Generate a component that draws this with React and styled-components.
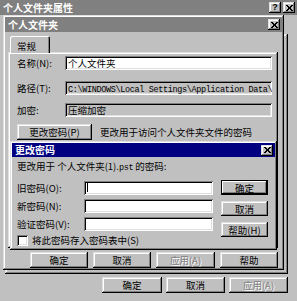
import React from "react";
import styled, { createGlobalStyle, css } from "styled-components";

const GlobalStyle = createGlobalStyle`
  html, body {
    margin: 0;
    padding: 0;
    background: #c0c0c0;
  }
  body {
    font-family: "Noto Sans CJK SC", "Liberation Sans", sans-serif;
    font-size: 9.5px;
    color: #000;
  }
  * {
    box-sizing: border-box;
  }
`;

const raised = css`
  box-shadow: inset -1px -1px #000, inset 1px 1px #dfdfdf,
    inset -2px -2px #808080, inset 2px 2px #fff;
`;

const sunken = css`
  box-shadow: inset 1px 1px #808080, inset -1px -1px #fff,
    inset 2px 2px #000, inset -2px -2px #dfdfdf;
`;

const Desktop = styled.div`
  position: relative;
  width: 297px;
  height: 301px;
  overflow: hidden;
  background: #c0c0c0;
`;

const MainWindow = styled.div`
  display: flex;
  flex-direction: column;
  width: 297px;
  height: 301px;
`;

const Window = styled.div`
  position: absolute;
  left: ${(p) => p.$x}px;
  top: ${(p) => p.$y}px;
  width: ${(p) => p.$w}px;
  height: ${(p) => p.$h}px;
  display: flex;
  flex-direction: column;
  padding: 2px;
  background: #c0c0c0;
  ${raised};
`;

const TitleBar = styled.div`
  display: flex;
  align-items: center;
  height: ${(p) => p.$h}px;
  flex-shrink: 0;
  padding: 0 2px 0 3px;
  background: ${(p) => (p.$active ? "#000080" : "#808080")};
  color: #fff;
  font-weight: bold;
  font-size: 10px;
  line-height: 1;
`;

const TitleText = styled.span`
  flex: 1;
  white-space: nowrap;
`;

const CaptionButton = styled.div`
  display: flex;
  align-items: center;
  justify-content: center;
  width: 12px;
  height: 11px;
  margin-left: ${(p) => p.$gap || 0}px;
  background: #c0c0c0;
  color: #000;
  font-family: "Liberation Sans", sans-serif;
  font-size: 9px;
  font-weight: bold;
  ${raised};
`;

const CloseGlyph = () => (
  <svg width="7" height="6" viewBox="0 0 7 6" shapeRendering="crispEdges">
    <path
      d="M0 0h2v1h1v1h1V1h1V0h2v1H6v1H5v2h1v1h1v1H5V5H4V4H3v1H2v1H0V5h1V4h1V2H1V1H0z"
      fill="#000"
    />
  </svg>
);

const OuterBody = styled.div`
  flex: 1;
  display: flex;
  flex-direction: column;
  padding: 19px 9px 8px 5px;
`;

const OuterPanel = styled.div`
  flex: 1;
  ${raised};
`;

const ButtonRow = styled.div`
  display: flex;
  justify-content: flex-end;
  gap: ${(p) => p.$gap}px;
  margin-top: ${(p) => p.$mt}px;
  padding-right: ${(p) => p.$pr}px;
  flex-shrink: 0;
`;

const Button = styled.div`
  display: flex;
  align-items: center;
  justify-content: center;
  width: ${(p) => p.$w}px;
  height: ${(p) => p.$h || 16}px;
  background: #c0c0c0;
  white-space: nowrap;
  color: ${(p) => (p.$disabled ? "#808080" : "#000")};
  text-shadow: ${(p) => (p.$disabled ? "1px 1px #fff" : "none")};
  ${(p) =>
    p.$default
      ? css`
          box-shadow: inset 0 0 0 1px #000, inset -2px -2px #000,
            inset 2px 2px #fff, inset -3px -3px #808080;
        `
      : raised};
`;

const TabStrip = styled.div`
  display: flex;
  padding-left: 5px;
  margin-top: 4px;
  height: 16px;
  flex-shrink: 0;
`;

const Tab = styled.div`
  width: 40px;
  height: 17px;
  padding: 3px 0 0 7px;
  background: #c0c0c0;
  position: relative;
  z-index: 1;
  border-top-left-radius: 2px;
  border-top-right-radius: 2px;
  box-shadow: inset 1px 1px #fff, inset -1px 0 #000, inset -2px 0 #808080;
`;

const TabPanel = styled.div`
  flex: 1;
  margin: 0 4px 0 3px;
  padding: 4px 6px 0 9px;
  ${raised};
`;

const FieldRow = styled.div`
  display: grid;
  grid-template-columns: 48px 1fr;
  align-items: center;
  margin-top: ${(p) => p.$mt || 0}px;
`;

const Label = styled.span`
  white-space: nowrap;
`;

const Field = styled.div`
  height: ${(p) => p.$h || 14}px;
  padding: 0 2px 0 3px;
  line-height: ${(p) => p.$h || 14}px;
  white-space: nowrap;
  overflow: hidden;
  background: ${(p) => (p.$readOnly ? "#c0c0c0" : "#fff")};
  ${sunken};
`;

const MonoText = styled.span`
  font-family: "Liberation Mono", monospace;
  font-size: 8.5px;
  letter-spacing: -0.35px;
`;

const ActionRow = styled.div`
  display: flex;
  align-items: center;
  gap: 8px;
  margin-top: 7px;
`;

const Message = styled.div`
  margin: 3px 0 0 5px;
  height: 12px;
  line-height: 12px;
  white-space: nowrap;
`;

const FormArea = styled.div`
  display: flex;
  align-items: flex-start;
  margin-top: 8px;
  padding-left: 5px;
`;

const FormColumn = styled.div`
  display: flex;
  flex-direction: column;
  padding-top: 1px;
`;

const FormGrid = styled.div`
  display: grid;
  grid-template-columns: 67px 129px;
  grid-auto-rows: 14px;
  row-gap: 4px;
  align-items: center;
`;

const Caret = styled.span`
  display: inline-block;
  width: 1px;
  height: 9px;
  margin-top: 2px;
  background: #000;
  vertical-align: top;
`;

const ButtonColumn = styled.div`
  display: flex;
  flex-direction: column;
  gap: 6px;
  margin-left: 8px;
`;

const CheckRow = styled.label`
  display: flex;
  align-items: center;
  gap: 4px;
  margin-top: 3px;
  height: 12px;
  white-space: nowrap;
`;

const CheckBox = styled.span`
  width: 11px;
  height: 11px;
  background: #fff;
  ${sunken};
`;

export default function App() {
  return (
    <>
      <GlobalStyle />
      <Desktop>
        <MainWindow>
          <TitleBar $h={15}>
            <TitleText>个人文件夹属性</TitleText>
            <CaptionButton>?</CaptionButton>
            <CaptionButton $gap={2}>
              <CloseGlyph />
            </CaptionButton>
          </TitleBar>
          <OuterBody>
            <OuterPanel />
            <ButtonRow $gap={4} $mt={3} $pr={0}>
              <Button $w={60}>确定</Button>
              <Button $w={59}>取消</Button>
              <Button $w={59} $disabled>
                应用(A)
              </Button>
            </ButtonRow>
          </OuterBody>
        </MainWindow>

        <Window $x={3} $y={15} $w={281} $h={255}>
          <TitleBar $h={15}>
            <TitleText>个人文件夹</TitleText>
            <CaptionButton>
              <CloseGlyph />
            </CaptionButton>
          </TitleBar>
          <TabStrip>
            <Tab>常规</Tab>
          </TabStrip>
          <TabPanel>
            <FieldRow>
              <Label>名称(N):</Label>
              <Field>个人文件夹</Field>
            </FieldRow>
            <FieldRow $mt={11}>
              <Label>路径(T):</Label>
              <Field $readOnly>
                <MonoText>{"C:\\WINDOWS\\Local Settings\\Application Data\\"}</MonoText>
              </Field>
            </FieldRow>
            <FieldRow $mt={8}>
              <Label>加密:</Label>
              <Field $readOnly>压缩加密</Field>
            </FieldRow>
            <ActionRow>
              <Button $w={75}>更改密码(P)</Button>
              <span>更改用于访问个人文件夹文件的密码</span>
            </ActionRow>
          </TabPanel>
          <ButtonRow $gap={5} $mt={4} $pr={4}>
            <Button $w={58}>确定</Button>
            <Button $w={58}>取消</Button>
            <Button $w={59} $disabled>
              应用(A)
            </Button>
            <Button $w={58}>帮助</Button>
          </ButtonRow>
        </Window>

        <Window $x={10} $y={141} $w={267} $h={109}>
          <TitleBar $h={14} $active>
            <TitleText>更改密码</TitleText>
            <CaptionButton>
              <CloseGlyph />
            </CaptionButton>
          </TitleBar>
          <Message>
            更改用于 个人文件夹(1).<MonoText>pst</MonoText> 的密码:
          </Message>
          <FormArea>
            <FormColumn>
              <FormGrid>
                <Label>旧密码(O):</Label>
                <Field>
                  <Caret />
                </Field>
                <Label>新密码(N):</Label>
                <Field />
                <Label>验证密码(V):</Label>
                <Field />
              </FormGrid>
              <CheckRow>
                <CheckBox />
                将此密码存入密码表中(S)
              </CheckRow>
            </FormColumn>
            <ButtonColumn>
              <Button $w={47} $h={15} $default>
                确定
              </Button>
              <Button $w={47} $h={15}>
                取消
              </Button>
              <Button $w={47} $h={15}>
                帮助(H)
              </Button>
            </ButtonColumn>
          </FormArea>
        </Window>
      </Desktop>
    </>
  );
}
